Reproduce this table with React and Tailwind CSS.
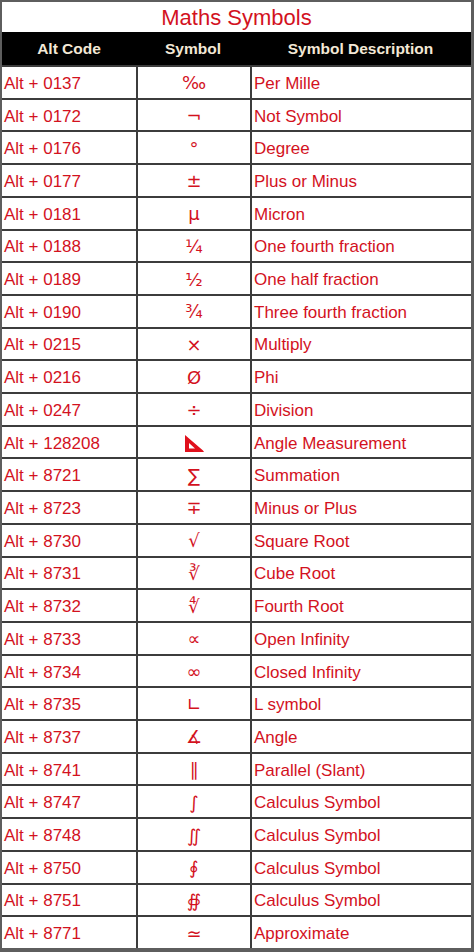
const rows = [
  ["Alt + 0137", "‰", "Per Mille"],
  ["Alt + 0172", "¬", "Not Symbol"],
  ["Alt + 0176", "°", "Degree"],
  ["Alt + 0177", "±", "Plus or Minus"],
  ["Alt + 0181", "µ", "Micron"],
  ["Alt + 0188", "¼", "One fourth fraction"],
  ["Alt + 0189", "½", "One half fraction"],
  ["Alt + 0190", "¾", "Three fourth fraction"],
  ["Alt + 0215", "×", "Multiply"],
  ["Alt + 0216", "Ø", "Phi"],
  ["Alt + 0247", "÷", "Division"],
  ["Alt + 128208", "ruler", "Angle Measurement"],
  ["Alt + 8721", "∑", "Summation"],
  ["Alt + 8723", "∓", "Minus or Plus"],
  ["Alt + 8730", "√", "Square Root"],
  ["Alt + 8731", "∛", "Cube Root"],
  ["Alt + 8732", "∜", "Fourth Root"],
  ["Alt + 8733", "∝", "Open Infinity"],
  ["Alt + 8734", "∞", "Closed Infinity"],
  ["Alt + 8735", "∟", "L symbol"],
  ["Alt + 8737", "∡", "Angle"],
  ["Alt + 8741", "∥", "Parallel (Slant)"],
  ["Alt + 8747", "∫", "Calculus Symbol"],
  ["Alt + 8748", "∬", "Calculus Symbol"],
  ["Alt + 8750", "∮", "Calculus Symbol"],
  ["Alt + 8751", "∯", "Calculus Symbol"],
  ["Alt + 8771", "≃", "Approximate"],
]

// triangle ruler emoji, drawn flat red like the sheet shows it
const Ruler = () => (
  <svg width="19" height="17" viewBox="0 0 19 17">
    <path
      fillRule="evenodd"
      fill="#e0101c"
      d="M0 0 L0 17 L19 17 L18 15.5 Z M4 8 L4 13.5 L10 13.5 Z"
    />
  </svg>
)

const App = () => {
  return (
    <div className="w-[474px] h-[952px] bg-white border-l-2 border-t-2 border-r-[3px] border-b-[4px] border-[#5e5e5e] flex flex-col font-['Liberation_Sans','DejaVu_Sans',sans-serif] text-[#d3121e]">
      <div className="h-[30px] flex items-center justify-center text-[22px] leading-none pt-[1px]">
        Maths Symbols
      </div>
      <div className="h-[33px] bg-black grid grid-cols-[134px_114px_1fr] items-center text-[#f3e8d6] font-bold text-[15.5px]">
        <div className="text-center">Alt Code</div>
        <div className="text-center">Symbol</div>
        <div className="text-center">Symbol Description</div>
      </div>
      <div className="flex-1 grid grid-rows-[repeat(27,minmax(0,1fr))]">
        {rows.map(([code, sym, desc]) => (
          <div
            key={code}
            className="grid grid-cols-[134px_114px_1fr] border-t-2 border-[#3c3c3c] text-[17px] leading-none"
          >
            <div className="flex items-center pl-[2px] pt-[2px]">{code}</div>
            <div className="flex items-center justify-center border-l-2 border-[#3c3c3c] pt-[2px] font-['DejaVu_Sans',sans-serif] text-[18px]">
              {sym === "ruler" ? <Ruler /> : sym}
            </div>
            <div className="flex items-center pl-[2px] pt-[2px] border-l-2 border-[#3c3c3c]">{desc}</div>
          </div>
        ))}
      </div>
    </div>
  )
}

export default App
